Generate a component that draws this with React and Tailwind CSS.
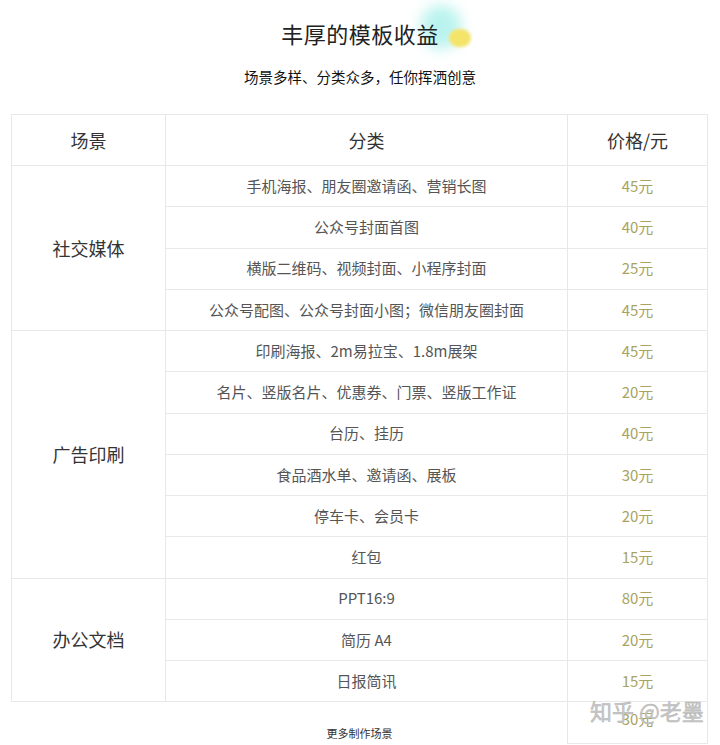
const groups = [
  {
    name: '社交媒体',
    items: [
      ['手机海报、朋友圈邀请函、营销长图', '45元'],
      ['公众号封面首图', '40元'],
      ['横版二维码、视频封面、小程序封面', '25元'],
      ['公众号配图、公众号封面小图；微信朋友圈封面', '45元'],
    ],
  },
  {
    name: '广告印刷',
    items: [
      ['印刷海报、2m易拉宝、1.8m展架', '45元'],
      ['名片、竖版名片、优惠券、门票、竖版工作证', '20元'],
      ['台历、挂历', '40元'],
      ['食品酒水单、邀请函、展板', '30元'],
      ['停车卡、会员卡', '20元'],
      ['红包', '15元'],
    ],
  },
  {
    name: '办公文档',
    items: [
      ['PPT16:9', '80元'],
      ['简历 A4', '20元'],
      ['日报简讯', '15元'],
    ],
  },
]

const rowSpan = { 4: 'row-span-4', 6: 'row-span-6', 3: 'row-span-3' }

export default function App() {
  return (
    <div
      className="relative w-[720px] h-[745px] overflow-hidden bg-white"
      style={{ fontFamily: '"Noto Sans CJK SC", "Noto Sans", sans-serif' }}
    >
      {/* Title */}
      <div className="relative h-[114px] flex flex-col items-center">
        <div className="relative mt-[17px]">
          <div className="absolute left-[140px] top-[-12px] w-[40px] h-[44px] rounded-full bg-[#a8f0ea] blur-[7px] opacity-80" />
          <div className="absolute left-[168px] top-[12px] w-[22px] h-[18px] rounded-full bg-[#f4e46a] blur-[1.5px]" />
          <h1 className="relative text-[22px] leading-[32px] text-[#222] tracking-[0.5px]">丰厚的模板收益</h1>
        </div>
        <p className="mt-[18px] text-[14.5px] leading-[20px] text-[#111]">场景多样、分类众多，任你挥洒创意</p>
      </div>

      {/* Table */}
      <div className="ml-[11px] w-[697px] border-l border-t border-r border-[#e8e8e8]">
        <div className="grid grid-cols-[154px_402px_1fr] grid-rows-[51px_repeat(13,41.25px)]">
          <div className="flex items-center justify-center border-b border-r border-[#e8e8e8] text-[18px] text-[#333]">场景</div>
          <div className="flex items-center justify-center border-b border-r border-[#e8e8e8] text-[18px] text-[#333]">分类</div>
          <div className="flex items-center justify-center border-b border-[#e8e8e8] text-[18px] text-[#333]">价格/元</div>
          {groups.map((g) => (
            <Group key={g.name} group={g} />
          ))}
        </div>
      </div>

      {/* Next block, cut off */}
      <div className="flex h-[45px]">
        <div className="w-[567px] flex items-end justify-center pb-[6px]">
          <span className="ml-[152px] text-[11px] text-[#333]">更多制作场景</span>
        </div>
        <div className="w-[141px] h-[42px] border-l border-r border-b border-[#e8e8e8] flex items-center justify-center pb-[8px]">
          <span className="text-[15px] text-[#a9a35f]">30元</span>
        </div>
      </div>

      {/* Watermark */}
      <div
        className="absolute left-[590px] top-[697px] text-[22px] leading-[26px] text-[#c8c8c8]"
        style={{ WebkitTextStroke: '0.5px #b5b5b5' }}
      >
        知乎 @老墨
      </div>
    </div>
  )
}

function Group({ group }) {
  return (
    <>
      <div
        className={`${rowSpan[group.items.length]} flex items-center justify-center border-b border-r border-[#e8e8e8] text-[18px] text-[#333]`}
      >
        {group.name}
      </div>
      {group.items.map(([label, price], i) => (
        <Row key={i} label={label} price={price} />
      ))}
    </>
  )
}

function Row({ label, price }) {
  return (
    <>
      <div className="col-start-2 flex items-center justify-center border-b border-r border-[#e8e8e8] text-[15px] text-[#555]">
        {label}
      </div>
      <div className="flex items-center justify-center border-b border-[#e8e8e8] text-[15px] text-[#a9a35f]">
        {price}
      </div>
    </>
  )
}
